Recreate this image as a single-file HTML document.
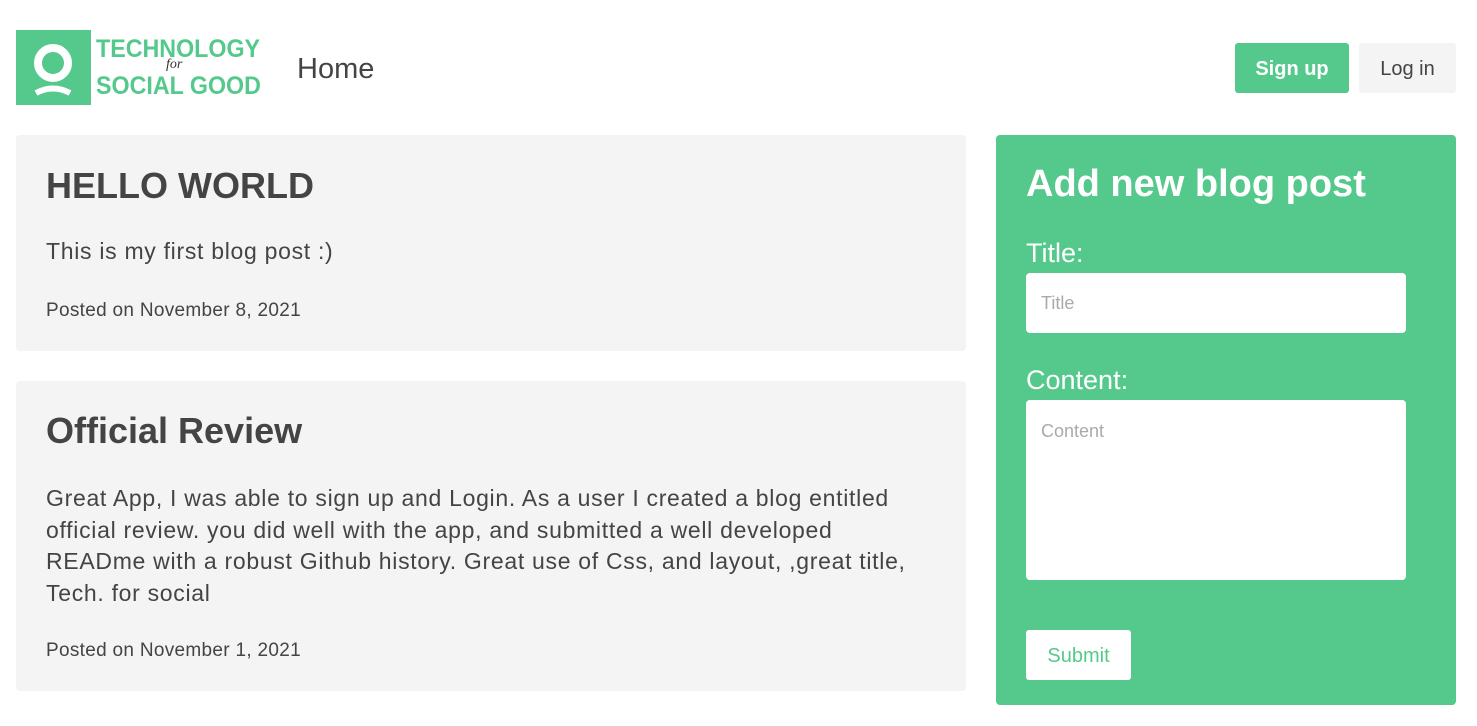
<!DOCTYPE html>
<html><head><style>
body{margin:0;background:#fff;font-family:"Segoe UI","Liberation Sans",sans-serif;color:#444;width:1477px;height:726px;overflow:hidden;position:relative}
.a{position:absolute}
.card{position:absolute;left:16px;width:950px;background:#f4f4f4;border-radius:4px}
h2{margin:0;font-weight:600;font-size:36px;color:#444}
.lg{color:#55c98c;font-weight:bold;font-size:25px;line-height:26px;transform:scaleX(0.93);transform-origin:0 0;white-space:nowrap}
.t{font-size:23px;letter-spacing:0.7px;white-space:nowrap}
.p{font-size:19px;letter-spacing:0.3px}
</style></head><body>
<div class="a" style="left:16px;top:30px;width:75px;height:75px;background:#55c98c">
<svg width="75" height="75"><circle cx="37" cy="33" r="15" fill="none" stroke="#fff" stroke-width="8"/><path d="M20 63 Q37 54 54 63" fill="none" stroke="#fff" stroke-width="6"/></svg></div>
<div class="a lg" style="left:96px;top:36px">TECHNOLOGY</div>
<div class="a" style="left:166px;top:57px;color:#333;font-family:'Liberation Serif',serif;font-style:italic;font-size:14px">for</div>
<div class="a lg" style="left:96px;top:73px">SOCIAL GOOD</div>
<div class="a" style="left:297px;top:53px;font-size:29px">Home</div>
<div class="a" style="left:1235px;top:43px;width:114px;height:50px;background:#55c98c;border-radius:3px;color:#fff;font-weight:bold;font-size:20px;text-align:center;line-height:52px">Sign up</div>
<div class="a" style="left:1359px;top:43px;width:97px;height:50px;background:#f4f4f4;border-radius:3px;color:#444;font-size:20px;text-align:center;line-height:52px">Log in</div>
<div class="card" style="top:135px;height:216px">
<h2 class="a" style="left:30px;top:30px">HELLO WORLD</h2>
<div class="a t" style="left:30px;top:103px">This is my first blog post :)</div>
<div class="a p" style="left:30px;top:165px">Posted on November 8, 2021</div></div>
<div class="card" style="top:381px;height:310px">
<h2 class="a" style="left:30px;top:29px">Official Review</h2>
<div class="a t" style="left:30px;top:102px;line-height:31.5px">Great App, I was able to sign up and Login. As a user I created a blog entitled<br>official review. you did well with the app, and submitted a well developed<br>READme with a robust Github history. Great use of Css, and layout, ,great title,<br>Tech. for social</div>
<div class="a p" style="left:30px;top:259px">Posted on November 1, 2021</div></div>
<div class="a" style="left:996px;top:135px;width:460px;height:570px;background:#55c98c;border-radius:4px;color:#fff">
<h2 class="a" style="left:30px;top:28px;color:#fff;font-size:38px">Add new blog post</h2>
<div class="a" style="left:30px;top:103px;font-size:27px">Title:</div>
<div class="a" style="left:30px;top:138px;width:380px;height:60px;background:#fff;border-radius:4px;color:#aaa;font-size:18px;line-height:60px;text-indent:15px">Title</div>
<div class="a" style="left:30px;top:230px;font-size:27px">Content:</div>
<div class="a" style="left:30px;top:265px;width:380px;height:180px;background:#fff;border-radius:4px;color:#aaa;font-size:18px;line-height:62px;text-indent:15px">Content</div>
<div class="a" style="left:30px;top:495px;width:105px;height:50px;background:#fff;border-radius:3px;color:#55c98c;font-size:20px;text-align:center;line-height:52px">Submit</div>
</div>
</body></html>
